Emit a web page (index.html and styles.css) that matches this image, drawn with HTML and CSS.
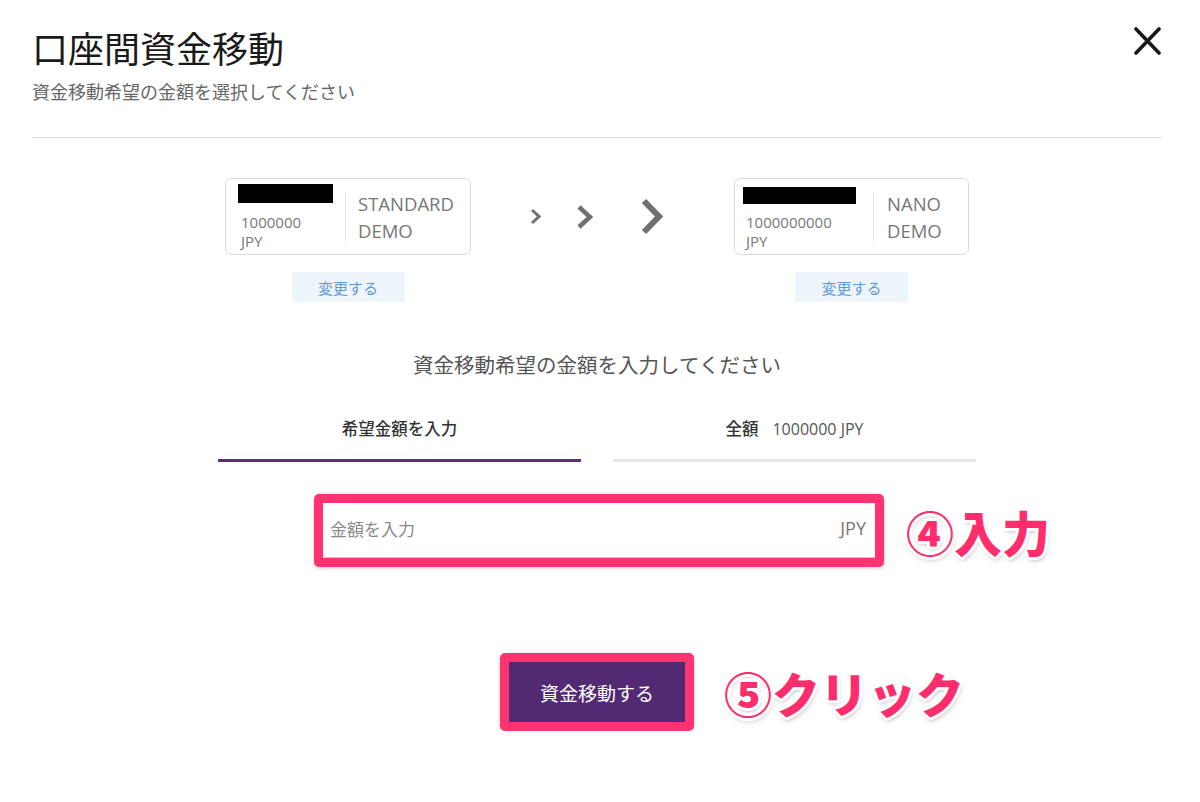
FILE: index.html
```html
<!DOCTYPE html>
<html lang="ja">
<head>
    <meta charset="UTF-8">
    <link rel="stylesheet" href="styles.css">
</head>
<body>
    <div class="modal">
        <header class="modal-header">
            <div>
                <h1 class="title">口座間資金移動</h1>
                <p class="subtitle">資金移動希望の金額を選択してください</p>
            </div>
            <button class="close-btn" aria-label="閉じる">
                <svg width="29" height="28" viewBox="0 0 29 28">
                    <path d="M3 2 L26 26 M26 2 L3 26" stroke="#1a1a1a" stroke-width="3.6" stroke-linecap="round" fill="none"/>
                </svg>
            </button>
        </header>

        <hr class="divider">

        <!-- accounts -->
        <div class="accounts">
            <div class="account account-from">
                <div class="card">
                    <div class="card-info">
                        <div class="redacted"></div>
                        <p class="balance">1000000<br>JPY</p>
                    </div>
                    <div class="card-sep"></div>
                    <p class="card-type">STANDARD<br>DEMO</p>
                </div>
                <button class="change-btn">変更する</button>
            </div>

            <div class="arrows">
                <svg class="arrow-s" width="11" height="17" viewBox="0 0 11 17">
                    <polyline points="2,2 9,8.5 2,15" fill="none" stroke="#707070" stroke-width="3"/>
                </svg>
                <svg class="arrow-m" width="17" height="26" viewBox="0 0 17 26">
                    <polyline points="3,3 14,13 3,23" fill="none" stroke="#707070" stroke-width="4.5"/>
                </svg>
                <svg class="arrow-l" width="23" height="39" viewBox="0 0 23 39">
                    <polyline points="4,4 19,19.5 4,35" fill="none" stroke="#707070" stroke-width="6"/>
                </svg>
            </div>

            <div class="account account-to">
                <div class="card">
                    <div class="card-info">
                        <div class="redacted"></div>
                        <p class="balance">1000000000<br>JPY</p>
                    </div>
                    <div class="card-sep"></div>
                    <p class="card-type">NANO<br>DEMO</p>
                </div>
                <button class="change-btn">変更する</button>
            </div>
        </div>

        <p class="prompt">資金移動希望の金額を入力してください</p>

        <div class="tabs">
            <div class="tab active">希望金額を入力</div>
            <div class="tab">全額<span class="tab-amount">1000000 JPY</span></div>
        </div>

        <div class="step-row">
            <div class="highlight amount-field">
                <span class="placeholder">金額を入力</span>
                <span class="currency">JPY</span>
            </div>
            <span class="note">④入力</span>
        </div>

        <div class="step-row submit-row">
            <div class="highlight">
                <button class="submit-btn">資金移動する</button>
            </div>
            <span class="note note-click">⑤クリック</span>
        </div>
    </div>
</body>
</html>
```

FILE: styles.css
```css
body {
    margin: 0;
    background-color: #fff;
    color: #333;
    font-family: 'Open Sans', 'Noto Sans CJK JP', sans-serif;
}

.modal {
    padding: 25px 38px 0 32px;
}

.modal-header {
    display: flex;
    justify-content: space-between;
    align-items: flex-start;
}

.title {
    margin: 0;
    font-size: 36px;
    line-height: 44px;
    font-weight: 400;
    color: #1a1a1a;
    font-family: 'Noto Sans CJK JP', sans-serif;
}

.subtitle {
    margin: 11px 0 0;
    font-size: 18px;
    line-height: 24px;
    color: #666;
}

.close-btn {
    margin-top: 2px;
    padding: 0;
    border: none;
    background: none;
    cursor: pointer;
}

.divider {
    margin: 33px 0 0;
    border: none;
    border-top: 1px solid #e0e0e0;
}

/* accounts */
.accounts {
    margin-top: 40px;
    display: flex;
    justify-content: center;
}

.account {
    display: flex;
    flex-direction: column;
    align-items: center;
}

.account-from {
    width: 246px;
}

.account-to {
    width: 235px;
}

.card {
    box-sizing: border-box;
    width: 100%;
    height: 77px;
    border: 1px solid #dcdcdc;
    border-radius: 6px;
    display: flex;
    align-items: center;
    padding: 0 12px;
}

.account-to .card {
    padding-left: 8px;
}

.card-info {
    align-self: flex-start;
    padding-top: 5px;
}

.redacted {
    width: 95px;
    height: 19px;
    background-color: #000;
}

.account-to .redacted {
    width: 113px;
    height: 17px;
    margin-top: 3px;
}

.balance {
    margin: 10px 0 0 3px;
    font-size: 15px;
    line-height: 19px;
    color: #777;
}

.account-to .balance {
    margin-top: 9px;
}

.card-sep {
    width: 1px;
    height: 49px;
    background-color: #e2e2e2;
    margin: 0 12px;
}

.account-to .card-sep {
    margin: 0 13px 0 17px;
}

.card-type {
    margin: 0;
    font-size: 18.5px;
    line-height: 27px;
    color: #777;
}

.change-btn {
    margin-top: 17px;
    width: 113px;
    height: 30px;
    border: none;
    background-color: #eef4fb;
    color: #5f9bd6;
    font-size: 15px;
    font-family: 'Noto Sans CJK JP', sans-serif;
    cursor: pointer;
}

.arrows {
    width: 263px;
    height: 77px;
    box-sizing: border-box;
    padding-left: 59px;
    display: flex;
    align-items: center;
}

.arrow-s {
    margin-right: 35px;
}

.arrow-m {
    margin-right: 47px;
}

.prompt {
    margin: 49px 0 0;
    text-align: center;
    font-size: 20.5px;
    line-height: 28px;
    color: #555;
}

/* tabs */
.tabs {
    margin-top: 38px;
    display: flex;
    justify-content: center;
    gap: 32px;
}

.tab {
    width: 363px;
    text-align: center;
    padding-bottom: 18px;
    border-bottom: 3px solid #e6e6e6;
    font-size: 16.5px;
    line-height: 24px;
    font-weight: 500;
    color: #333;
}

.tab.active {
    border-bottom-color: #5b2f80;
}

.tab-amount {
    margin-left: 14px;
    font-size: 16px;
    font-weight: 400;
    color: #555;
}

/* annotated steps */
.step-row {
    margin-top: 32px;
    display: grid;
    grid-template-columns: 1fr auto 1fr;
    align-items: center;
}

.highlight {
    grid-column: 2;
    border: 9px solid #ff3370;
    border-radius: 5px;
    box-shadow: 0 1px 4px rgba(0, 0, 0, 0.2);
}

.amount-field {
    box-sizing: border-box;
    width: 570px;
    margin-left: 4px;
    height: 73px;
    display: flex;
    justify-content: space-between;
    align-items: center;
    padding: 0 9px 5px 7px;
    background-color: #fff;
    box-shadow: 0 1px 4px rgba(0, 0, 0, 0.2), inset 0 -1px 0 #c8c8c8;
    font-size: 17px;
}

.placeholder {
    color: #8a8a8a;
}

.currency {
    color: #777;
    font-size: 18px;
}

.note {
    grid-column: 3;
    padding-left: 22px;
    font-family: 'Noto Sans CJK JP', sans-serif;
    font-size: 48px;
    font-weight: 900;
    line-height: 56px;
    color: #ff2d6b;
    text-shadow:
        3px 0 #fff, -3px 0 #fff, 0 3px #fff, 0 -3px #fff,
        2px 2px #fff, -2px -2px #fff, 2px -2px #fff, -2px 2px #fff,
        1px 3px 5px rgba(0, 0, 0, 0.35);
}

.submit-row {
    margin-top: 86px;
}

.submit-btn {
    display: block;
    width: 176px;
    height: 60px;
    border: none;
    background-color: #522a74;
    color: #fff;
    font-size: 19px;
    font-family: 'Noto Sans CJK JP', sans-serif;
    cursor: pointer;
}

.note-click {
    padding-left: 30px;
    font-size: 48px;
}
```
